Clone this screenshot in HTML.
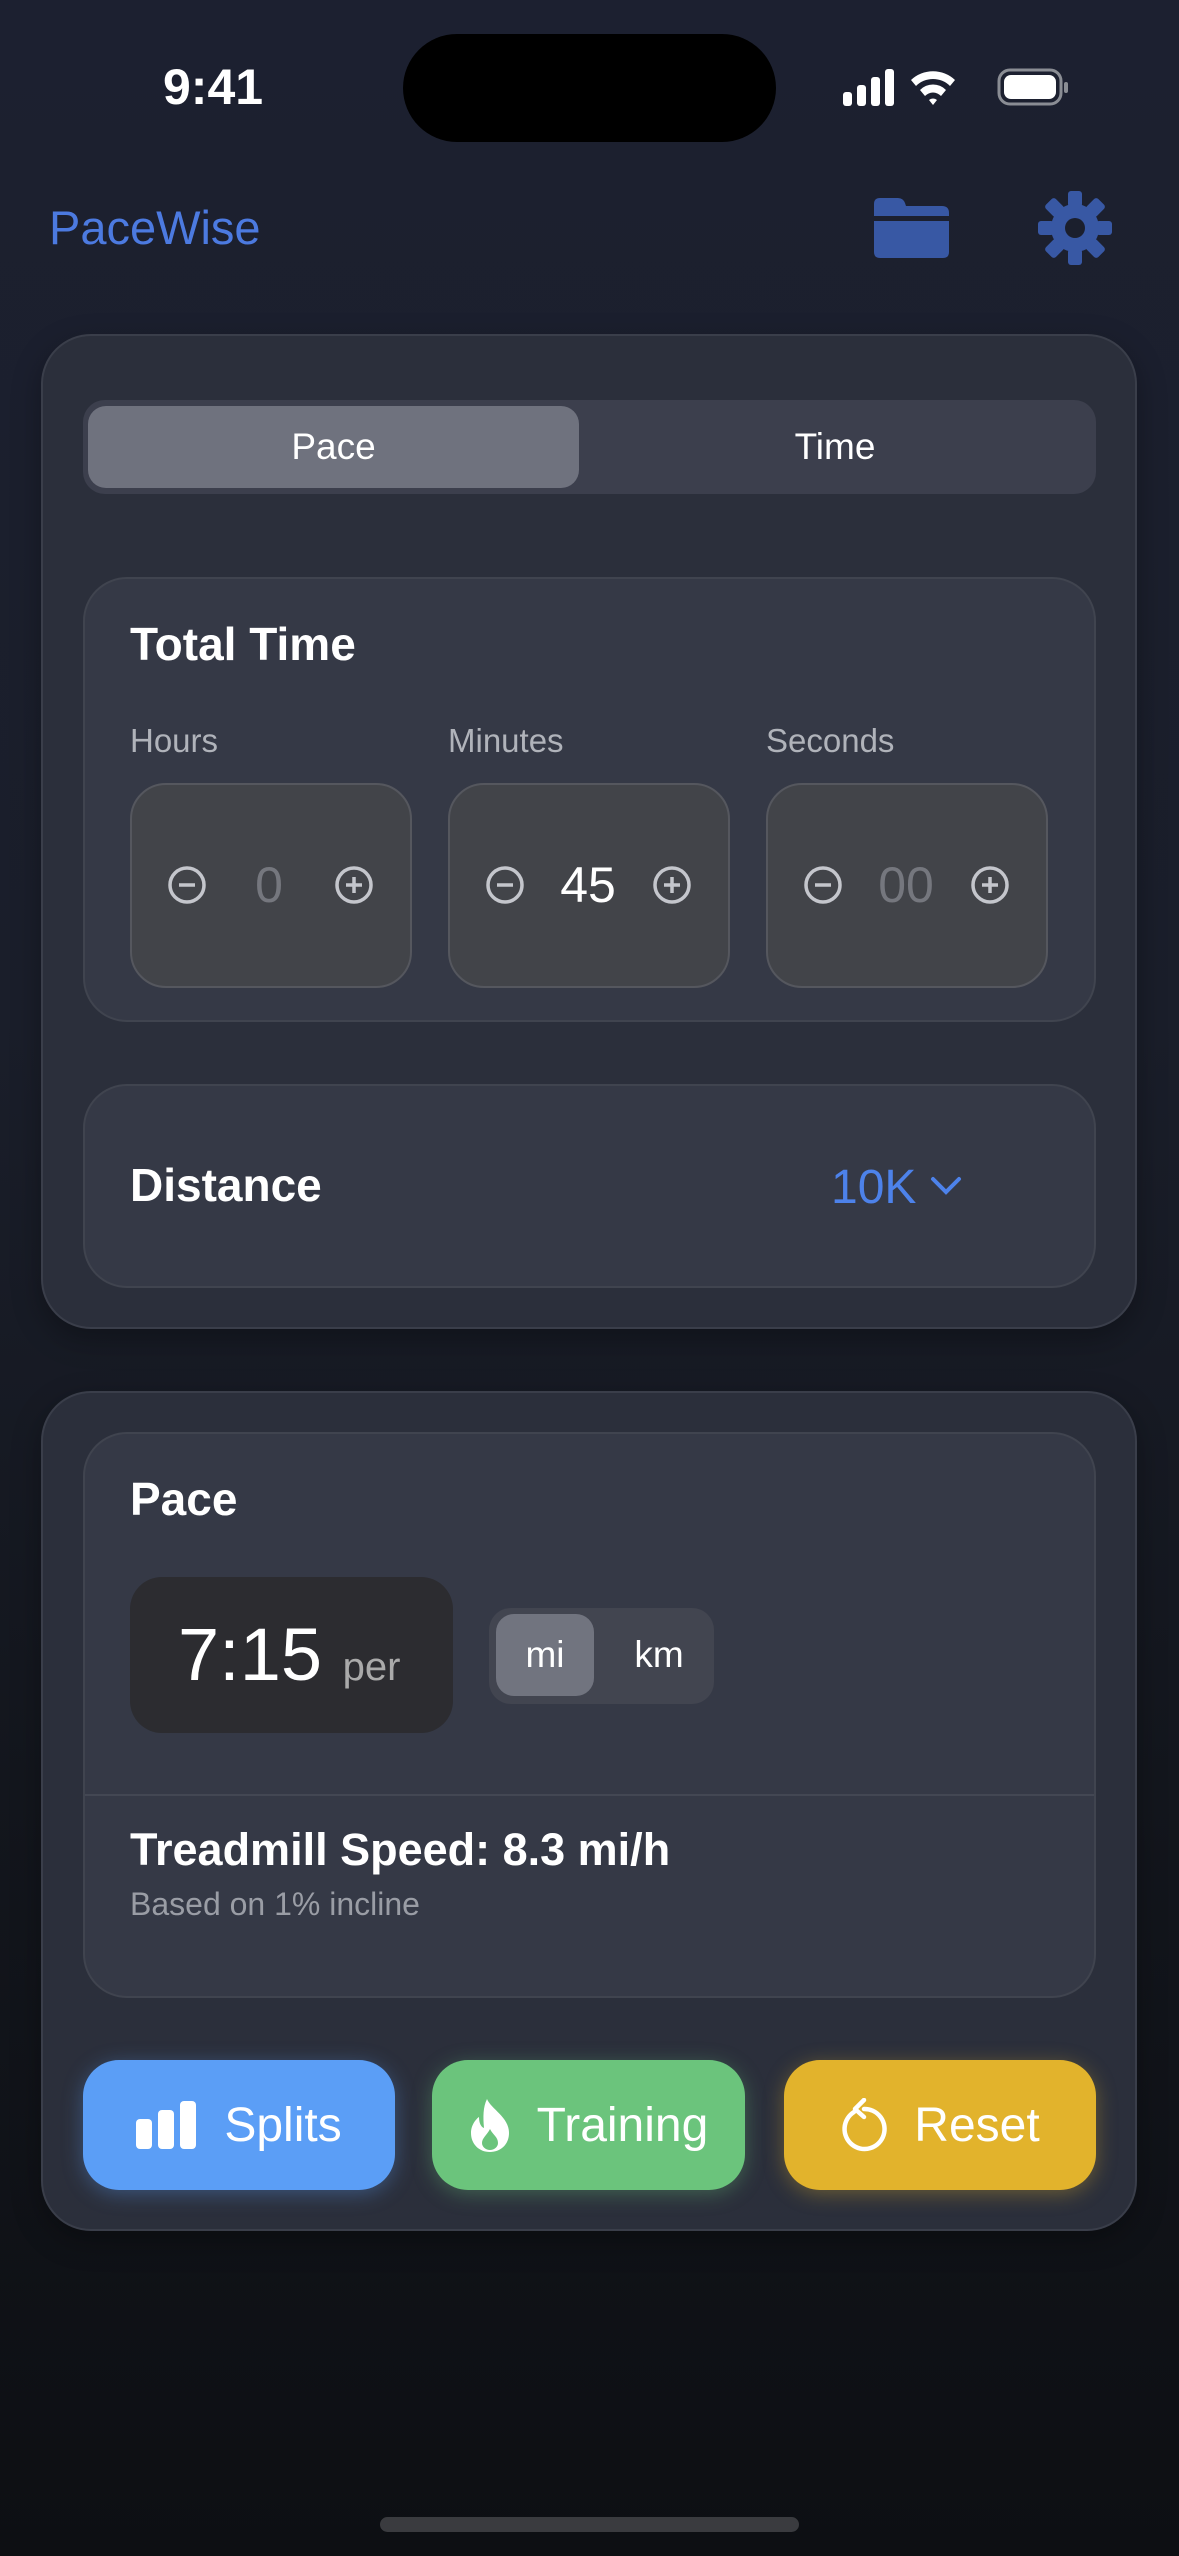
<!DOCTYPE html>
<html><head><meta charset="utf-8"><style>
*{margin:0;padding:0;box-sizing:border-box}
body{width:1179px;height:2556px;overflow:hidden;background:linear-gradient(180deg,#1c2030 0%,#1a1e2a 40%,#13161d 70%,#0d0f13 100%);font-family:"Liberation Sans",sans-serif;color:#fff;position:relative}
.a{position:absolute}
.card{position:absolute;background:#2b2f3b;border:2px solid #3a3e4a;border-radius:50px;box-shadow:0 10px 30px rgba(0,0,0,.3)}
.inner{position:absolute;background:#353946;border:2px solid #40444f;border-radius:44px}
.box{position:absolute;top:783px;width:282px;height:205px;background:#424449;border:2px solid #55575e;border-radius:36px}
.lbl{position:absolute;top:722px;font-size:33px;color:#b0b3ba}
.btn{position:absolute;top:2060px;height:130px;border-radius:36px;font-size:48px;display:flex;align-items:center;justify-content:center;gap:26px}
</style></head><body>
<div class="a" style="left:163px;top:58px;font-size:50px;font-weight:bold">9:41</div>
<div class="a" style="left:403px;top:34px;width:373px;height:108px;border-radius:54px;background:#000"></div>
<svg class="a" style="left:843px;top:66px" width="240" height="42" viewBox="0 0 240 42">
<rect x="0" y="26" width="9" height="14" rx="3" fill="#fff"/><rect x="14" y="19" width="9" height="21" rx="3" fill="#fff"/><rect x="28" y="11" width="9" height="29" rx="3" fill="#fff"/><rect x="42" y="3" width="9" height="37" rx="3" fill="#fff"/>
<path d="M68 14 A32 32 0 0 1 112 14 L107 20 A24 24 0 0 0 73 20 Z M77 24 A18 18 0 0 1 103 24 L98 30 A11 11 0 0 0 82 30 Z M86 34 A6 6 0 0 1 94 34 L90 39 Z" fill="#fff"/>
<rect x="156" y="4" width="62" height="34" rx="11" fill="none" stroke="#8a8d94" stroke-width="3"/><rect x="161" y="9" width="52" height="24" rx="7" fill="#fff"/><rect x="221" y="16" width="4" height="11" rx="2" fill="#8a8d94"/>
</svg>
<div class="a" style="left:49px;top:200px;font-size:47px;color:#4c7ae0">PaceWise</div>
<svg class="a" style="left:872px;top:196px" width="80" height="64" viewBox="0 0 80 64"><path d="M2 8 Q2 2 8 2 L26 2 Q31 2 33 7 L34 10 L70 10 Q77 10 77 17 L77 20 L2 20 Z" fill="#3858a4"/><path d="M2 25 L77 25 L77 56 Q77 62 71 62 L8 62 Q2 62 2 56 Z" fill="#3858a4"/></svg>
<svg class="a" style="left:1037px;top:190px" width="76" height="76" viewBox="-38 -38 76 76"><g fill="#3858a4"><circle r="24"/><g id="t"><rect x="-7" y="-37" width="14" height="16" rx="3"/></g><use href="#t" transform="rotate(45)"/><use href="#t" transform="rotate(90)"/><use href="#t" transform="rotate(135)"/><use href="#t" transform="rotate(180)"/><use href="#t" transform="rotate(225)"/><use href="#t" transform="rotate(270)"/><use href="#t" transform="rotate(315)"/></g><circle r="10" fill="#1b1f2d"/></svg>

<div class="card" style="left:41px;top:334px;width:1096px;height:995px"></div>
<div class="a" style="left:83px;top:400px;width:1013px;height:94px;background:#3c3f4d;border-radius:22px"></div>
<div class="a" style="left:88px;top:406px;width:491px;height:82px;background:#6f727e;border-radius:18px;font-size:37px;display:flex;align-items:center;justify-content:center">Pace</div>
<div class="a" style="left:579px;top:406px;width:512px;height:82px;font-size:37px;display:flex;align-items:center;justify-content:center">Time</div>
<div class="inner" style="left:83px;top:577px;width:1013px;height:445px"></div>
<div class="a" style="left:130px;top:617px;font-size:46px;font-weight:bold">Total Time</div>
<div class="lbl" style="left:130px">Hours</div><div class="lbl" style="left:448px">Minutes</div><div class="lbl" style="left:766px">Seconds</div>
<div class="box" style="left:130px"></div><div class="box" style="left:448px"></div><div class="box" style="left:766px"></div>
<svg class="a" style="left:0;top:850px" width="1179" height="70">
<g fill="none" stroke="#c4c6cc" stroke-width="3.5">
<circle cx="187" cy="35" r="17"/><path d="M179 35h16"/><circle cx="354" cy="35" r="17"/><path d="M346 35h16M354 27v16"/>
<circle cx="505" cy="35" r="17"/><path d="M497 35h16"/><circle cx="672" cy="35" r="17"/><path d="M664 35h16M672 27v16"/>
<circle cx="823" cy="35" r="17"/><path d="M815 35h16"/><circle cx="990" cy="35" r="17"/><path d="M982 35h16M990 27v16"/>
</g></svg>
<div class="a" style="left:219px;top:856px;width:100px;text-align:center;font-size:50px;color:#75777e">0</div>
<div class="a" style="left:538px;top:856px;width:100px;text-align:center;font-size:50px;color:#fff">45</div>
<div class="a" style="left:856px;top:856px;width:100px;text-align:center;font-size:50px;color:#75777e">00</div>

<div class="inner" style="left:83px;top:1084px;width:1013px;height:204px"></div>
<div class="a" style="left:130px;top:1158px;font-size:46px;font-weight:bold">Distance</div>
<div class="a" style="left:831px;top:1160px;font-size:48px;color:#4d82ea">10K</div>
<svg class="a" style="left:928px;top:1174px" width="36" height="24"><path d="M5 5 L18 18 L31 5" fill="none" stroke="#4d82ea" stroke-width="4" stroke-linecap="round"/></svg>

<div class="card" style="left:41px;top:1391px;width:1096px;height:840px"></div>
<div class="inner" style="left:83px;top:1432px;width:1013px;height:566px"></div>
<div class="a" style="left:130px;top:1472px;font-size:46px;font-weight:bold">Pace</div>
<div class="a" style="left:130px;top:1577px;width:323px;height:156px;background:#2c2c30;border-radius:32px"></div>
<div class="a" style="left:178px;top:1612px;font-size:74px">7:15 <span style="font-size:40px;color:#aaa">per</span></div>
<div class="a" style="left:489px;top:1608px;width:225px;height:96px;background:#424550;border-radius:22px"></div>
<div class="a" style="left:496px;top:1614px;width:98px;height:82px;background:#71747f;border-radius:18px;font-size:37px;display:flex;align-items:center;justify-content:center">mi</div>
<div class="a" style="left:610px;top:1614px;width:98px;height:82px;font-size:37px;display:flex;align-items:center;justify-content:center">km</div>
<div class="a" style="left:85px;top:1794px;width:1009px;height:2px;background:#434753"></div>
<div class="a" style="left:130px;top:1824px;font-size:45px;font-weight:bold">Treadmill Speed: 8.3 mi/h</div>
<div class="a" style="left:130px;top:1886px;font-size:32px;color:#9a9da5">Based on 1% incline</div>

<div class="btn" style="left:83px;width:312px;background:#5b9ef6;box-shadow:0 4px 20px rgba(91,158,246,.35)"><svg width="62" height="48"><rect x="0" y="18" width="16" height="30" rx="4" fill="#fff"/><rect x="22" y="9" width="16" height="39" rx="4" fill="#fff"/><rect x="44" y="0" width="16" height="48" rx="4" fill="#fff"/></svg>Splits</div>
<div class="btn" style="left:432px;width:313px;background:#6bc47c;box-shadow:0 4px 20px rgba(107,196,124,.35)"><svg width="42" height="56" viewBox="0 0 42 56"><path d="M18 2 C22 12 40 20 40 36 C40 48 31 55 21 55 C10 55 2 47 2 36 C2 28 7 22 10 20 C10 26 12 30 15 31 C14 20 14 10 18 2 Z" fill="#fff"/><path d="M21 32 C24 38 29 40 29 46 C29 50 25 53 21 53 C17 53 13 50 13 46 C13 41 18 38 21 32 Z" fill="#6bc47c"/></svg>Training</div>
<div class="btn" style="left:784px;width:312px;background:#e2b32c;box-shadow:0 4px 20px rgba(226,179,44,.35)"><svg width="48" height="54" viewBox="0 0 48 54"><path d="M14 14 A20 20 0 1 0 24 11" fill="none" stroke="#fff" stroke-width="4.5" stroke-linecap="round"/><path d="M24 2 L15 11 L24 19" fill="none" stroke="#fff" stroke-width="4.5" stroke-linecap="round" stroke-linejoin="round"/></svg>Reset</div>

<div class="a" style="left:380px;top:2517px;width:419px;height:15px;border-radius:8px;background:#3a3b3f"></div>
</body></html>
